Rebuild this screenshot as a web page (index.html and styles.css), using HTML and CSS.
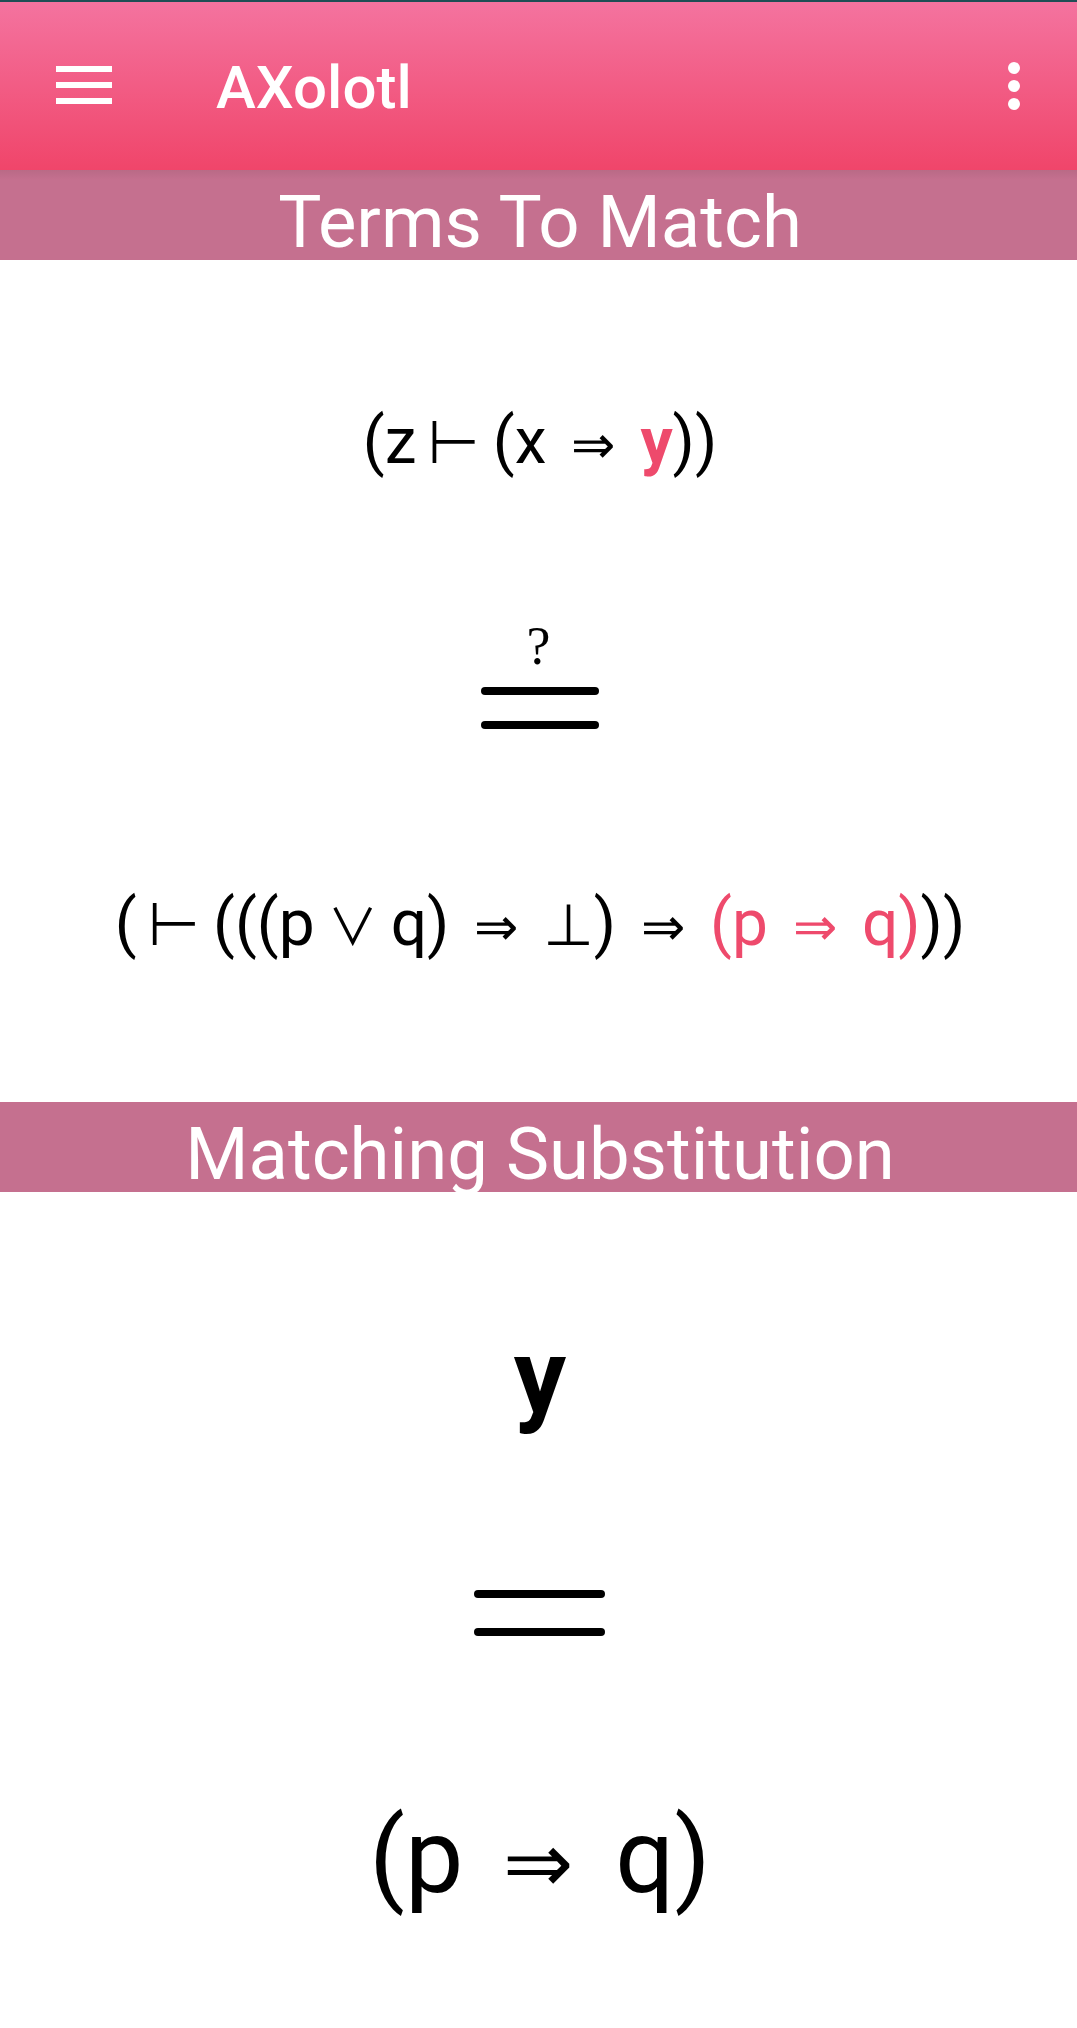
FILE: index.html
```html
<!DOCTYPE html>
<html lang="en">
  <head>
    <meta charset="UTF-8" />
    <meta name="viewport" content="width=device-width, initial-scale=1.0" />
    <title>AXolotl</title>

    <link rel="stylesheet" href="styles.css">
  </head>
  <body>
    <div class="status-strip"></div>
    <header class="app-bar">
      <div class="menu-icon"><span></span><span></span><span></span></div>
      <div class="app-title">AXolotl</div>
      <div class="more-icon"><span></span><span></span><span></span></div>
    </header>

    <h2 class="band">Terms To Match</h2>
    <div class="match-section">
      <div class="term term-top">(z<span class="turnstile">⊢</span>(x<span class="arrow">⇒</span><b class="hit">y</b>))</div>
      <div class="question">?</div>
      <div class="rule"></div>
      <div class="rule rule-second"></div>
      <div class="term term-bottom">(<span class="turnstile">⊢</span>(((p<span class="or">∨</span>q)<span class="arrow">⇒</span><span class="bot">⊥</span>)<span class="arrow">⇒</span><span class="hit">(p<span class="arrow">⇒</span>q)</span>))</div>
    </div>

    <h2 class="band">Matching Substitution</h2>
    <div class="subst-section">
      <div class="subst-var">y</div>
      <div class="rule rule-wide"></div>
      <div class="rule rule-wide rule-second-wide"></div>
      <div class="subst-term">(p<span class="arrow">⇒</span>q)</div>
    </div>
  </body>
</html>
```
FILE: styles.css
```css
body {
  margin: 0;
  background-color: white;
  font-family: Roboto, sans-serif;
  color: black;
}

.status-strip {
  height: 2px;
  background-color: #1f4e55;
}
.app-bar {
  display: flex;
  align-items: center;
  height: 168px;
  background: linear-gradient(#f4739f, #f0456a);
  color: white;
}
.menu-icon {
  display: flex;
  flex-direction: column;
  justify-content: space-between;
  width: 56px;
  height: 38px;
  margin-left: 56px;
  margin-bottom: 2px;
}
.menu-icon span {
  height: 6px;
  background-color: white;
}
.app-title {
  flex-grow: 1;
  margin-left: 104px;
  margin-top: 2px;
  font-size: 60px;
  font-weight: 500;
}
.more-icon {
  display: flex;
  flex-direction: column;
  gap: 6px;
  margin-right: 57px;
}
.more-icon span {
  width: 12px;
  height: 12px;
  border-radius: 50%;
  background-color: white;
}

.band {
  margin: 0;
  padding-left: 3px;
  height: 90px;
  background-color: #c5708f;
  color: white;
  font-size: 72.5px;
  font-weight: 400;
  line-height: 106px;
  text-align: center;
}
.app-bar + .band {
  background: linear-gradient(#b96a86, #c5708f 10px);
}

.match-section {
  height: 842px;
  display: flex;
  flex-direction: column;
  align-items: center;
}
.term {
  padding-left: 3px;
  font-size: 64px;
  line-height: 72px;
  white-space: nowrap;
}
.term-top {
  margin-top: 146px;
}
.term-bottom {
  margin-top: 158px;
}
.question {
  margin-top: 144px;
  height: 63px;
  font-family: "Liberation Serif", serif;
  font-size: 54px;
  line-height: 42px;
}
.rule {
  width: 118px;
  height: 8px;
  margin-left: 2px;
  border-radius: 4px;
  background-color: black;
}
.question + .rule {
  margin-top: -1px;
}
.rule-second {
  margin-top: 26px;
}
.rule-wide {
  width: 131px;
}
.rule-second-wide {
  margin-top: 30px;
}

.hit {
  color: #ee4a6c;
}
.turnstile {
  margin: 0 13px 0 11px;
  font-family: "DejaVu Sans", sans-serif;
  font-size: 60px;
}
.arrow {
  margin: 0 25px;
  font-family: "Liberation Serif", serif;
  font-size: 53px;
}
.or {
  margin: 0 13px;
  font-family: "Noto Sans CJK JP", sans-serif;
  font-size: 50px;
}
.bot {
  margin: 0;
  font-family: "DejaVu Sans", sans-serif;
  font-size: 58px;
}

.subst-section {
  display: flex;
  flex-direction: column;
  align-items: center;
}
.subst-var {
  margin-top: 135px;
  padding-left: 3px;
  font-size: 104px;
  font-weight: bold;
  line-height: 100px;
}
.subst-var + .rule {
  margin-top: 163px;
}
.subst-term {
  margin-top: 162px;
  padding-left: 3px;
  font-size: 104px;
  line-height: 117px;
  white-space: nowrap;
}
.subst-term .arrow {
  margin: 0 42px 0 40px;
  font-size: 84px;
}
```
